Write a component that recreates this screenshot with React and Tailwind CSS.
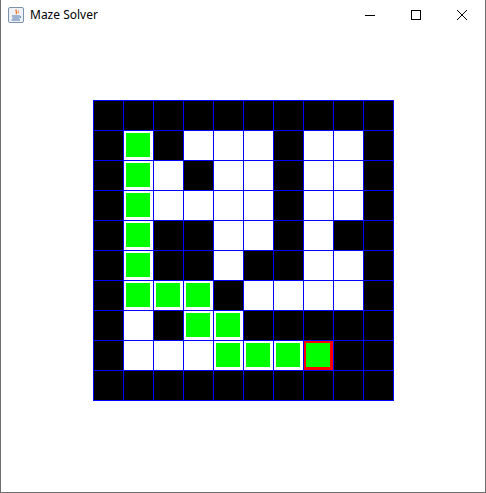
import React from 'react';

// 0 = wall, 1 = open, 2 = path, 3 = current (end)
const MAZE = [
  [0, 0, 0, 0, 0, 0, 0, 0, 0, 0],
  [0, 2, 0, 1, 1, 1, 0, 1, 1, 0],
  [0, 2, 1, 0, 1, 1, 0, 1, 1, 0],
  [0, 2, 1, 1, 1, 1, 0, 1, 1, 0],
  [0, 2, 0, 0, 1, 1, 0, 1, 0, 0],
  [0, 2, 0, 0, 1, 0, 0, 1, 1, 0],
  [0, 2, 2, 2, 0, 1, 1, 1, 1, 0],
  [0, 1, 0, 2, 2, 0, 0, 0, 0, 0],
  [0, 1, 1, 1, 2, 2, 2, 3, 0, 0],
  [0, 0, 0, 0, 0, 0, 0, 0, 0, 0],
];

function JavaIcon() {
  return (
    <svg width="16" height="16" viewBox="0 0 16 16">
      <rect x="0.5" y="0.5" width="15" height="15" rx="1.5" fill="#eef2f7" stroke="#7d93ab" />
      <path d="M8.5 2.5c-2 1.5 1.5 2.5-0.5 4.5" fill="none" stroke="#e8762b" strokeWidth="1.3" />
      <path d="M10.5 3.5c-1.5 1 0.8 1.8-0.6 3" fill="none" stroke="#e8762b" strokeWidth="1" />
      <path d="M4 9h7.5M4.5 11h6.5M3.5 13h8.5" stroke="#4a76a8" strokeWidth="1" />
      <path d="M11.5 9c1.6 0 1.6 2 0 2" fill="none" stroke="#4a76a8" strokeWidth="1" />
    </svg>
  );
}

function Cell({ type }) {
  if (type === 0) {
    return <div className="w-[30px] h-[30px] border-l border-t border-[#0000ff] bg-black" />;
  }
  if (type === 1) {
    return <div className="w-[30px] h-[30px] border-l border-t border-[#0000ff] bg-white" />;
  }
  return (
    <div
      className={
        type === 3
          ? 'w-[30px] h-[30px] border-l border-t border-[#0000ff] bg-[#ff0000] pl-[2px] pt-[2px]'
          : 'w-[30px] h-[30px] border-l border-t border-[#0000ff] bg-white pl-[2px] pt-[2px]'
      }
    >
      <div className="w-[24px] h-[24px] bg-[#00ff00]" />
    </div>
  );
}

export default function App() {
  return (
    <div className="w-[486px] h-[493px] bg-white flex flex-col border-x border-b border-[#6e6e6e] font-['Noto_Sans',sans-serif]">
      {/* Title bar */}
      <div className="h-[30px] flex items-center">
        <div className="pl-[7px] pr-[6px] flex items-center">
          <JavaIcon />
        </div>
        <span className="text-[12px] text-black leading-none">Maze Solver</span>
        <div className="ml-auto flex h-full">
          <div className="w-[46px] h-full flex items-center justify-center">
            <div className="w-[10px] h-px bg-black" />
          </div>
          <div className="w-[46px] h-full flex items-center justify-center">
            <div className="w-[10px] h-[10px] border border-black" />
          </div>
          <div className="w-[46px] h-full flex items-center justify-center">
            <svg width="10" height="10" viewBox="0 0 10 10">
              <path d="M0 0L10 10M10 0L0 10" stroke="#000" strokeWidth="1" />
            </svg>
          </div>
        </div>
      </div>

      {/* Maze panel */}
      <div className="flex-1 pl-[92px] pt-[70px]">
        <div className="grid grid-cols-[repeat(10,30px)] w-fit border-r border-b border-[#0000ff]">
          {MAZE.flatMap((row, r) =>
            row.map((type, c) => <Cell key={`${r}-${c}`} type={type} />)
          )}
        </div>
      </div>
    </div>
  );
}
